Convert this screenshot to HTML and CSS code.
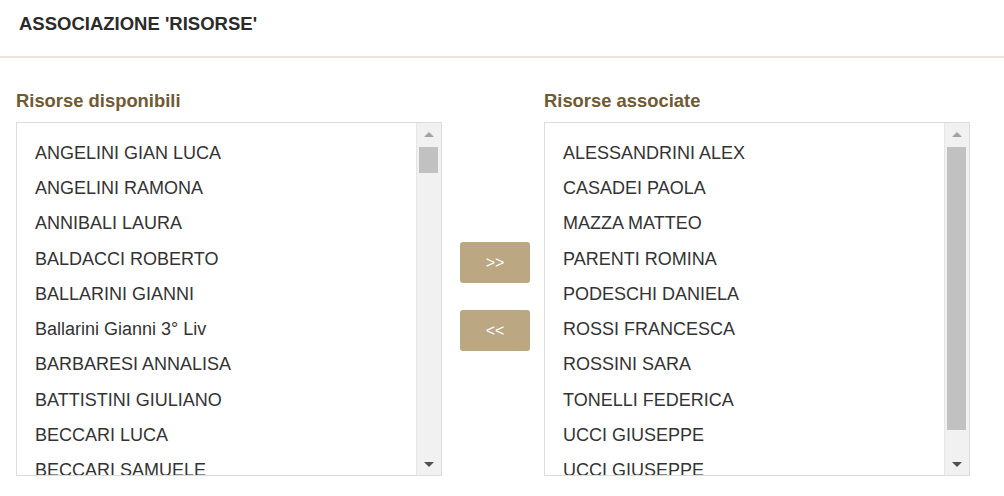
FILE: index.html
```html
<!DOCTYPE html>
<html lang="it">
<head>
<meta charset="utf-8">
<title>Associazione Risorse</title>
<link rel="stylesheet" href="styles.css">
</head>
<body>
<div class="header"><h1 class="title">ASSOCIAZIONE 'RISORSE'</h1></div>
<div class="content">
  <div class="column">
    <div class="label">Risorse disponibili</div>
    <div class="listbox">
      <ul class="items">
        <li>ANGELINI GIAN LUCA</li>
        <li>ANGELINI RAMONA</li>
        <li>ANNIBALI LAURA</li>
        <li>BALDACCI ROBERTO</li>
        <li>BALLARINI GIANNI</li>
        <li>Ballarini Gianni 3° Liv</li>
        <li>BARBARESI ANNALISA</li>
        <li>BATTISTINI GIULIANO</li>
        <li>BECCARI LUCA</li>
        <li>BECCARI SAMUELE</li>
      </ul>
      <div class="scrollbar">
        <div class="arrow up"></div>
        <div class="track"><div class="thumb thumb-small"></div></div>
        <div class="arrow down"></div>
      </div>
    </div>
  </div>
  <div class="actions">
    <button class="btn">&gt;&gt;</button>
    <button class="btn">&lt;&lt;</button>
  </div>
  <div class="column">
    <div class="label">Risorse associate</div>
    <div class="listbox">
      <ul class="items">
        <li>ALESSANDRINI ALEX</li>
        <li>CASADEI PAOLA</li>
        <li>MAZZA MATTEO</li>
        <li>PARENTI ROMINA</li>
        <li>PODESCHI DANIELA</li>
        <li>ROSSI FRANCESCA</li>
        <li>ROSSINI SARA</li>
        <li>TONELLI FEDERICA</li>
        <li>UCCI GIUSEPPE</li>
        <li>UCCI GIUSEPPE</li>
      </ul>
      <div class="scrollbar">
        <div class="arrow up"></div>
        <div class="track"><div class="thumb thumb-large"></div></div>
        <div class="arrow down"></div>
      </div>
    </div>
  </div>
</div>
</body>
</html>
```
FILE: styles.css
```css
html, body {
  margin: 0;
  padding: 0;
  background: #fff;
  font-family: "Liberation Sans", Arial, sans-serif;
  color: #333;
}
.header {
  height: 58px;
  border-bottom: 2px solid #ebe4d8;
  box-sizing: border-box;
  padding: 13px 0 0 19px;
}
.title {
  margin: 0;
  font-size: 18.5px;
  font-weight: bold;
  line-height: 22px;
  color: #2b2b2b;
}
.content {
  display: flex;
  padding: 32px 0 0 16px;
}
.column {
  display: flex;
  flex-direction: column;
  width: 426px;
}
.label {
  font-size: 18.4px;
  font-weight: bold;
  color: #705a33;
  line-height: 22px;
  height: 32px;
}
.listbox {
  display: flex;
  height: 354px;
  border: 1px solid #dcdcdc;
  box-sizing: border-box;
  background: #fff;
}
.items {
  flex: 1;
  list-style: none;
  margin: 0;
  padding: 12.8px 0 0 18px;
  overflow: hidden;
}
.items li {
  font-size: 18px;
  line-height: 35.25px;
  height: 35.25px;
  white-space: nowrap;
  color: #333;
}
.scrollbar {
  width: 24px;
  background: #f1f1f1;
  border-left: 1px solid #e6e6e6;
  display: flex;
  flex-direction: column;
}
.arrow {
  height: 22px;
  display: flex;
  align-items: center;
  justify-content: center;
}
.arrow.up::before {
  content: "";
  border-left: 5px solid transparent;
  border-right: 5px solid transparent;
  border-bottom: 5px solid #a3a3a3;
}
.arrow.down::before {
  content: "";
  border-left: 5px solid transparent;
  border-right: 5px solid transparent;
  border-top: 5px solid #505050;
}
.track {
  flex: 1;
  padding: 2px 3px 0 2px;
}
.thumb {
  background: #c1c1c1;
}
.thumb-small { height: 26px; }
.thumb-large { height: 283px; }
.actions {
  width: 102px;
  box-sizing: border-box;
  display: flex;
  flex-direction: column;
  align-items: center;
  padding: 152px 0 0 4px;
  gap: 27px;
}
.btn {
  width: 70px;
  height: 41px;
  border: none;
  border-radius: 3px;
  background: #bba883;
  color: #fff;
  font-family: "Liberation Sans", Arial, sans-serif;
  font-size: 16px;
  padding: 0;
  cursor: pointer;
}
```
